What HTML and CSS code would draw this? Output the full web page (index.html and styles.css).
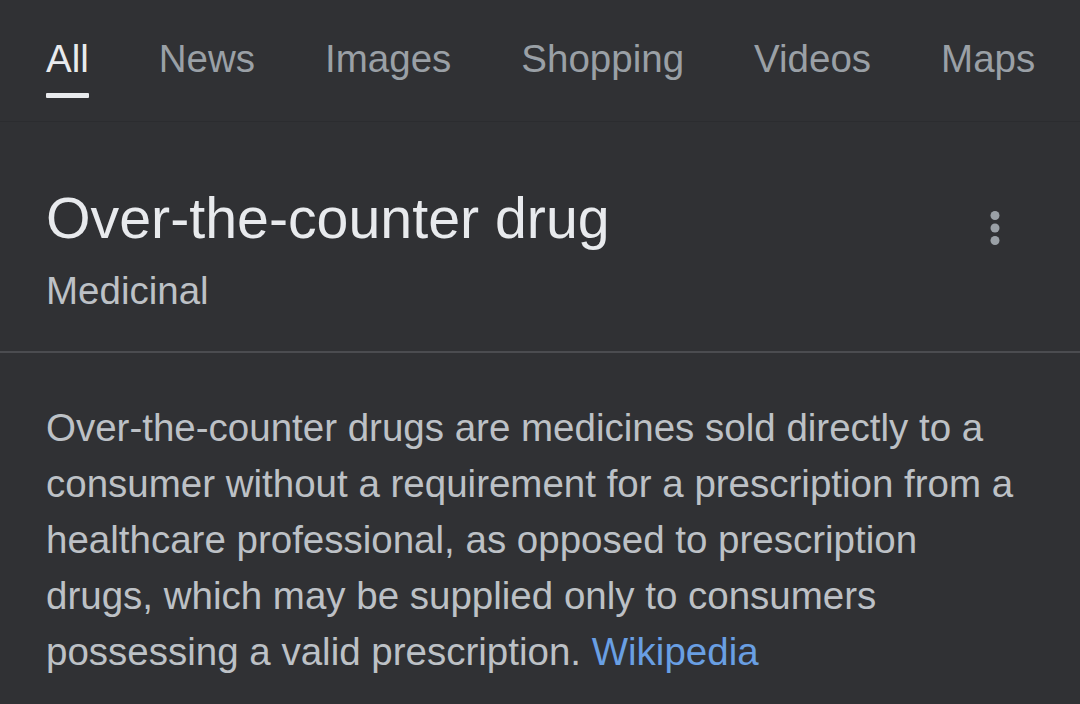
FILE: index.html
```html
<!DOCTYPE html>
<html lang="en">
<head>
<meta charset="utf-8">
<title>Over-the-counter drug</title>
<link rel="stylesheet" href="styles.css">
</head>
<body>
<nav class="tabs">
  <div class="tab active"><span class="tab-label">All</span><span class="tab-bar"></span></div>
  <div class="tab"><span class="tab-label">News</span></div>
  <div class="tab"><span class="tab-label">Images</span></div>
  <div class="tab"><span class="tab-label">Shopping</span></div>
  <div class="tab"><span class="tab-label">Videos</span></div>
  <div class="tab"><span class="tab-label">Maps</span></div>
</nav>
<section class="entity">
  <div class="entity-row">
    <div class="entity-text">
      <h1 class="entity-title">Over-the-counter drug</h1>
      <div class="entity-sub">Medicinal</div>
    </div>
    <svg class="kebab" width="10" height="34" viewBox="0 0 10 34" aria-hidden="true">
      <circle cx="5" cy="4.5" r="4.5"/>
      <circle cx="5" cy="17" r="4.5"/>
      <circle cx="5" cy="29.5" r="4.5"/>
    </svg>
  </div>
</section>
<section class="desc">
  <p class="desc-text">Over-the-counter drugs are medicines sold directly to a consumer without a requirement for a prescription from a healthcare professional, as opposed to prescription drugs, which may be supplied only to consumers possessing a valid prescription. <a class="desc-link" href="#">Wikipedia</a></p>
</section>
</body>
</html>
```
FILE: styles.css
```css
html, body {
  margin: 0;
  padding: 0;
  background: #303134;
}
body {
  font-family: "Liberation Sans", Arial, sans-serif;
  width: 1080px;
  height: 704px;
  overflow: hidden;
}
.tabs {
  display: flex;
  gap: 70px;
  padding: 0 0 0 46px;
  height: 121px;
  border-bottom: 1px solid #2b2c2f;
  box-sizing: content-box;
}
.tab {
  display: flex;
  flex-direction: column;
  align-items: stretch;
  padding-top: 37px;
}
.tab-label {
  font-size: 38.5px;
  line-height: 44px;
  color: #9aa0a6;
  white-space: nowrap;
}
.tab.active .tab-label {
  color: #e8eaed;
}
.tab-bar {
  display: block;
  height: 5px;
  margin-top: 12px;
  background: #e8eaed;
  border-radius: 1px;
}
.entity {
  padding: 63px 80px 0 46px;
  height: 166px;
  border-bottom: 2px solid #4b4c50;
}
.entity-row {
  display: flex;
  justify-content: space-between;
  align-items: flex-start;
}
.entity-title {
  margin: 0;
  font-weight: normal;
  font-size: 57.3px;
  line-height: 66px;
  color: #e8eaed;
}
.entity-sub {
  margin-top: 18px;
  font-size: 38.5px;
  line-height: 44px;
  color: #bdc1c6;
}
.kebab {
  display: block;
  margin-top: 26px;
  fill: #9aa0a6;
}
.desc {
  padding: 47px 46px 0 46px;
}
.desc-text {
  margin: 0;
  font-size: 38.5px;
  line-height: 56px;
  color: #bdc1c6;
}
.desc-link {
  color: #699fe3;
  text-decoration: none;
}
```
